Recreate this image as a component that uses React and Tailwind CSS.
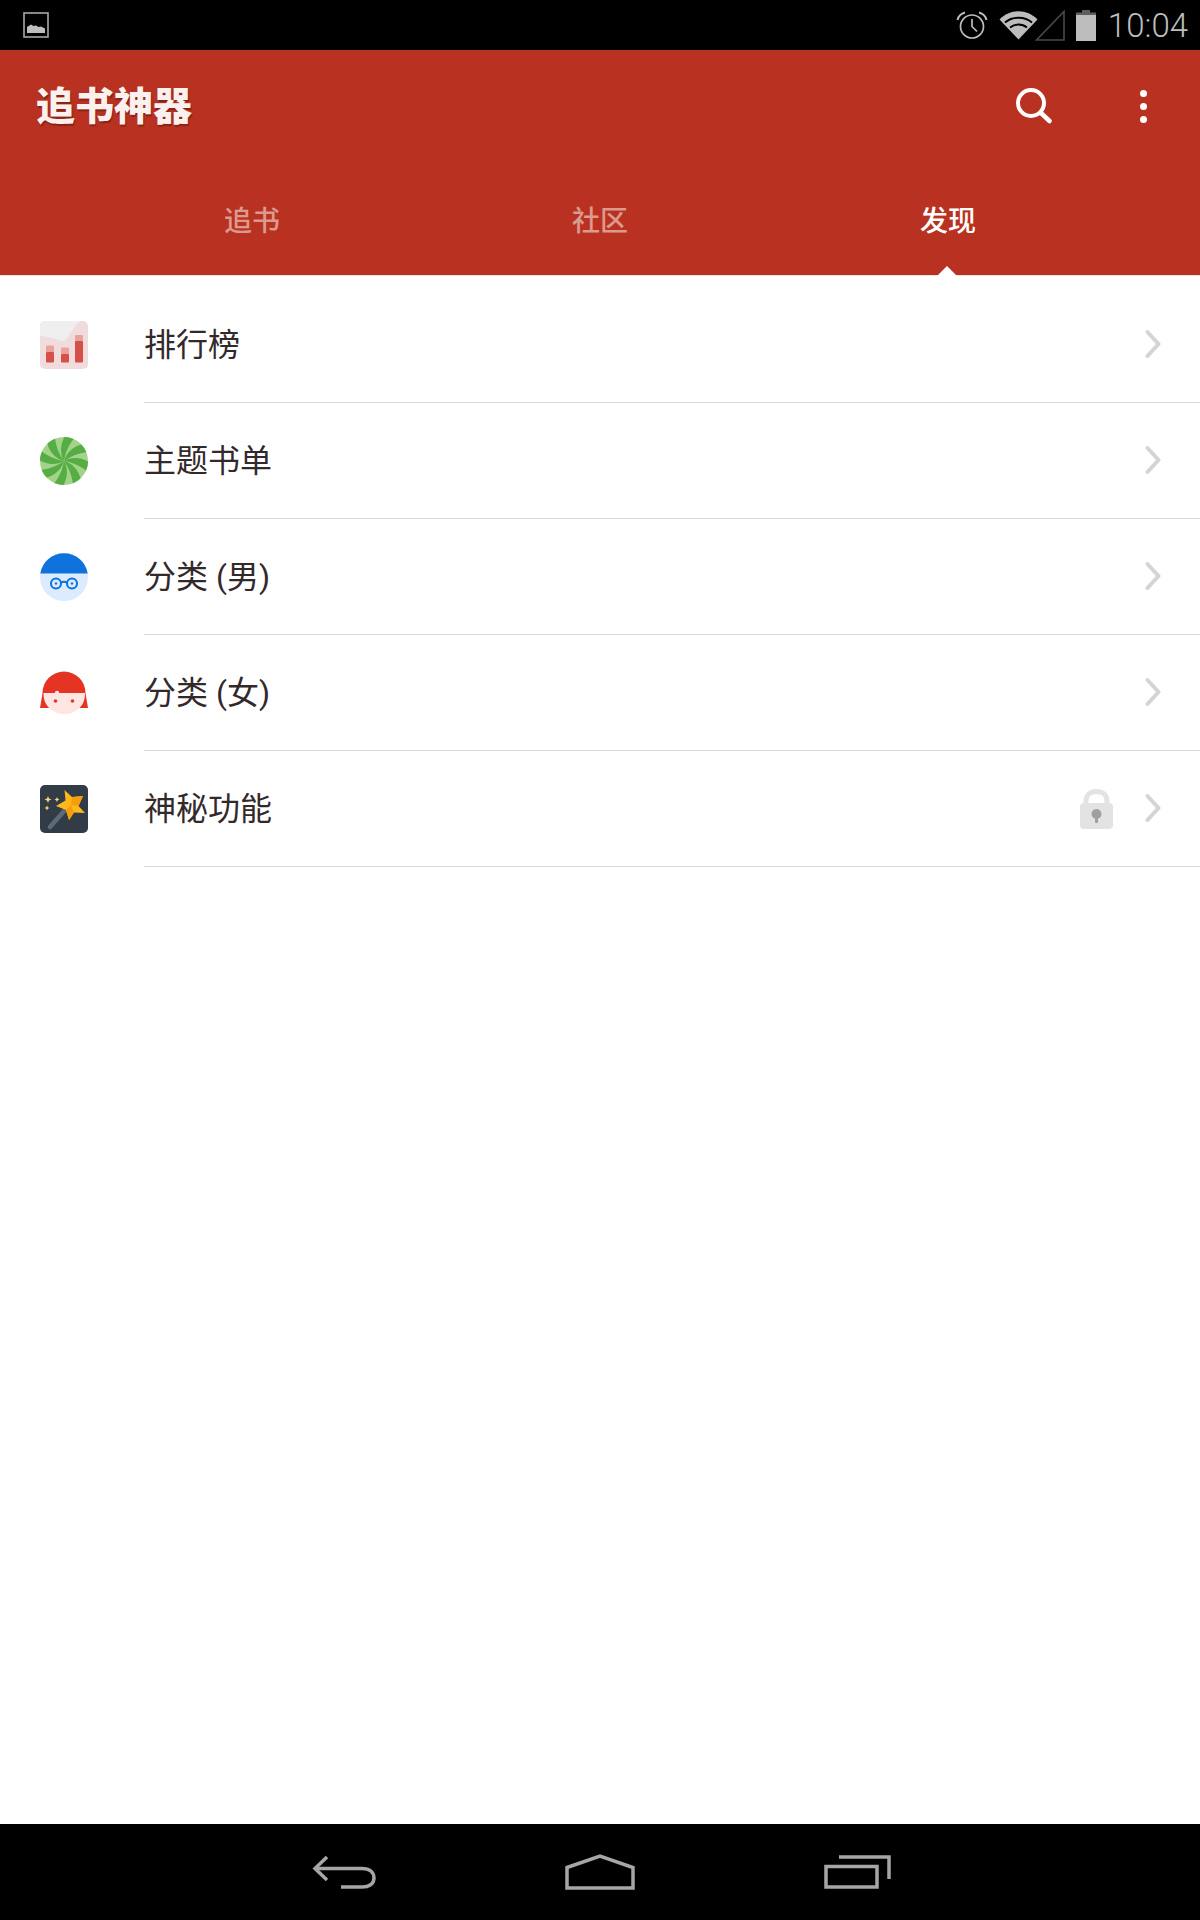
import React from "react";

const cjk = "font-['Roboto','Noto_Sans_CJK_SC',sans-serif]";

const PictureIcon = () => (
  <svg width="26" height="26" viewBox="0 0 26 26">
    <rect x="1" y="1" width="24" height="24" fill="none" stroke="#a8a8a8" strokeWidth="1.6" />
    <path d="M4 21V15L8 12.5 L10.5 14 L13 13.5 L15.5 15 L18 14.5 L20 15.5 L22 16.5 V21 Z" fill="#bdbdbd" />
  </svg>
);

const AlarmIcon = () => (
  <svg width="32" height="28" viewBox="0 0 32 28" fill="none" stroke="#bdbdbd">
    <circle cx="16" cy="15.5" r="11.5" strokeWidth="1.7" />
    <path d="M16 8V15.5L21 20.5" strokeWidth="1.7" />
    <path d="M1.5 9C2.5 5 5 2.5 9 1.5M30.5 9C29.5 5 27 2.5 23 1.5" strokeWidth="2" />
  </svg>
);

const WifiIcon = () => (
  <svg width="39" height="30" viewBox="0 0 39 30">
    <path d="M0.5 9.5C11 -1.5 28 -1.5 38.5 9.5L19.5 29.5Z" fill="#bdbdbd" />
    <path d="M6 12.5C13 6 26 6 33 12.5M11 17.5C16 13.5 23 13.5 28 17.5" fill="none" stroke="#000" strokeWidth="2" />
  </svg>
);

const SignalIcon = () => (
  <svg width="30" height="31" viewBox="0 0 30 31" className="-ml-[3px]">
    <path d="M1.5 30L29 1.5V30Z" fill="none" stroke="#4a4a4a" strokeWidth="1.6" />
  </svg>
);

const BatteryIcon = () => (
  <svg width="20" height="31" viewBox="0 0 20 31">
    <path d="M6 0H14V2.5H20V5H0V2.5H6Z" fill="#5e5e5e" />
    <rect x="0" y="5" width="20" height="26" fill="#bdbdbd" />
  </svg>
);

const SearchIcon = () => (
  <svg width="36" height="36" viewBox="0 0 36 36" fill="none" stroke="#fff" strokeLinecap="round">
    <circle cx="15" cy="15" r="13" strokeWidth="4" />
    <path d="M25 25L33.5 33" strokeWidth="4.5" />
  </svg>
);

const ChartIcon = () => (
  <svg width="48" height="48" viewBox="0 0 48 48">
    <rect width="48" height="48" rx="5" fill="#f0dcdc" />
    <path d="M0 14.5 C8 16 16 18 22 20 C28 21 29 10 40 0 H5 A5 5 0 0 0 0 5Z" fill="#efefef" />
    <path d="M6 25.5a1 1 0 0 1 1-1h6a1 1 0 0 1 1 1V31H6Z" fill="#e9a29e" />
    <rect x="6" y="31" width="8" height="10.5" fill="#d6504a" rx="1" />
    <path d="M21 27.5a1 1 0 0 1 1-1h6a1 1 0 0 1 1 1V33H21Z" fill="#e9a29e" />
    <rect x="21" y="33" width="8" height="8.5" fill="#d6504a" rx="1" />
    <path d="M35 15a1 1 0 0 1 1-1h6a1 1 0 0 1 1 1V20H35Z" fill="#e9a29e" />
    <rect x="35" y="20" width="8" height="21.5" fill="#d6504a" rx="1" />
  </svg>
);

// pinwheel blades of the candy icon
const bladeAngles = [0, 45, 90, 135, 180, 225, 270, 315];

const CandyIcon = () => (
  <svg width="48" height="48" viewBox="0 0 48 48">
    <circle cx="24" cy="24" r="24" fill="#a3d28a" />
    {bladeAngles.map((a) => (
      <path
        key={a}
        d="M24 24C20 17 20 8 24.5 0C27.5 0 30.5 .7 33.5 2C28 9 25.5 16 24 24Z"
        fill="#55ad43"
        transform={`rotate(${a} 24 24)`}
      />
    ))}
  </svg>
);

const BoyIcon = () => (
  <svg width="48" height="48" viewBox="0 0 48 48">
    <circle cx="24" cy="24" r="24" fill="#dcebff" />
    <path d="M0.3 20.5A24 24 0 0 1 47.7 20.5Z" fill="#0e71dc" />
    <g fill="none" stroke="#0e71dc" strokeWidth="2">
      <circle cx="16" cy="30.5" r="5" />
      <circle cx="32" cy="30.5" r="5" />
      <path d="M21 29.5C23 28.5 25 28.5 27 29.5" />
    </g>
    <circle cx="16" cy="30.5" r="1.2" fill="#0e71dc" />
    <circle cx="32" cy="30.5" r="1.2" fill="#0e71dc" />
  </svg>
);

const GirlIcon = () => (
  <svg width="48" height="48" viewBox="0 0 48 48">
    <path d="M2.5 24A21.5 21.5 0 0 1 45.5 24L48 39H0Z" fill="#e53423" />
    <path d="M3.5 24H45V25C45 37 36 45 24.5 45C13 45 3.5 37 3.5 25Z" fill="#ffe6e3" />
    <circle cx="17" cy="24" r="2.2" fill="#ffe6e3" />
    <circle cx="15.5" cy="32" r="1.8" fill="#e53423" />
    <circle cx="32.5" cy="32" r="1.8" fill="#e53423" />
  </svg>
);

const WandIcon = () => (
  <svg width="48" height="48" viewBox="0 0 48 48">
    <rect width="48" height="48" rx="5" fill="#323c46" />
    <path d="M10 42L25 25" stroke="#5b6a7c" strokeWidth="4.5" strokeLinecap="round" />
    <path d="M24.5 5L32 12L43 11L38.5 21L45 28L34 27.5L29 35L26 25L16 21L25.5 15.5Z" fill="#ffb71c" />
    <path d="M32 12L43 11L38.5 21L31 20ZM26 25L31 20L34 27.5L29 35Z" fill="#f59e0b" />
    <g fill="#f7d77b">
      <path d="M8 11L9 13.5 11.5 14.5 9 15.5 8 18 7 15.5 4.5 14.5 7 13.5Z" />
      <path d="M17 12L17.8 13.7 19.5 14.5 17.8 15.3 17 17 16.2 15.3 14.5 14.5 16.2 13.7Z" />
      <path d="M7 20.5L7.8 22.2 9.5 23 7.8 23.8 7 25.5 6.2 23.8 4.5 23 6.2 22.2Z" />
    </g>
  </svg>
);

const LockIcon = () => (
  <svg width="33" height="40" viewBox="0 0 33 40">
    <path d="M6 16V12C6 6 10 2.5 16.5 2.5C23 2.5 27 6 27 12V16" fill="none" stroke="#e3e3e3" strokeWidth="5" />
    <rect y="14" width="33" height="26" rx="4" fill="#e3e3e3" />
    <circle cx="16.5" cy="25" r="5" fill="#a0a0a0" />
    <rect x="15" y="26" width="3" height="8" rx="1" fill="#a0a0a0" />
  </svg>
);

const Chevron = () => (
  <svg width="16" height="30" viewBox="0 0 16 30" fill="none" stroke="#d4d4d4" strokeWidth="4" strokeLinecap="round" strokeLinejoin="round" className="-mt-[2px]">
    <path d="M2.5 3L13.5 15L2.5 27" />
  </svg>
);

const BackIcon = () => (
  <svg width="64" height="33" viewBox="0 0 64 33" fill="none" stroke="#a6a6a6" strokeWidth="3.5">
    <path d="M15 1L3 12.5L15 24" />
    <path d="M3 12.5H50C57 12.5 62 15.5 62 22C62 28 57 31 50 31H29" />
  </svg>
);

const HomeIcon = () => (
  <svg width="70" height="36" viewBox="0 0 70 36" fill="none" stroke="#a6a6a6" strokeWidth="3.5">
    <path d="M2 13.5L35 2L68 13.5V34H2Z" />
  </svg>
);

const RecentIcon = () => (
  <svg width="67" height="34" viewBox="0 0 67 34" fill="none" stroke="#a6a6a6" strokeWidth="3.5">
    <rect x="2" y="11.5" width="51" height="20.5" />
    <path d="M15 2H65V24" />
  </svg>
);

const rows = [
  { label: "排行榜", icon: <ChartIcon /> },
  { label: "主题书单", icon: <CandyIcon /> },
  { label: "分类 (男)", icon: <BoyIcon /> },
  { label: "分类 (女)", icon: <GirlIcon /> },
  { label: "神秘功能", icon: <WandIcon />, locked: true },
];

const tabs = [
  { label: "追书", active: false },
  { label: "社区", active: false },
  { label: "发现", active: true },
];

const App = () => {
  return (
    <div className={`w-[1200px] h-[1920px] flex flex-col bg-white overflow-hidden ${cjk}`}>
      {/* status bar */}
      <div className="h-[50px] bg-black flex items-center pl-[23px] pr-[12px]">
        <PictureIcon />
        <div className="ml-auto flex items-center">
          <AlarmIcon />
          <div className="ml-[11px] flex items-center">
            <WifiIcon />
            <SignalIcon />
          </div>
          <div className="ml-[11px]">
            <BatteryIcon />
          </div>
          <span className="ml-[12px] text-[33px] leading-none text-[#bdbdbd] font-['Roboto',sans-serif] font-light">10:04</span>
        </div>
      </div>

      {/* action bar + tabs */}
      <div className="h-[225px] bg-[#b93221] flex flex-col shrink-0">
        <div className="h-[112px] flex items-center pl-[36px] pr-[53px]">
          <span className="-mt-[5px] text-[39px] leading-none font-black text-[#faf0ee] [text-shadow:1px_2px_1px_rgba(90,20,10,0.5)] font-['Noto_Sans_CJK_SC',sans-serif]">
            追书神器
          </span>
          <div className="ml-auto mr-[88px]">
            <SearchIcon />
          </div>
          <div className="flex flex-col gap-[6px]">
            <span className="w-[7px] h-[7px] rounded-full bg-white" />
            <span className="w-[7px] h-[7px] rounded-full bg-white" />
            <span className="w-[7px] h-[7px] rounded-full bg-white" />
          </div>
        </div>
        <div className="flex-1 flex px-[78px]">
          {tabs.map((tab) => (
            <div key={tab.label} className="relative flex-1 flex items-center justify-center pt-[7px]">
              <span className={`text-[28px] leading-none ${tab.active ? "text-white font-medium" : "text-[#dc9a8f] font-medium"}`}>
                {tab.label}
              </span>
              {tab.active && (
                <span className="absolute bottom-[-1px] left-[calc(50%-11px)] w-0 h-0 border-x-[10px] border-x-transparent border-b-[10px] border-b-white" />
              )}
            </div>
          ))}
        </div>
      </div>

      {/* menu list */}
      <div className="flex-1 border-t border-[#e4e4e4] pt-[11px]">
        {rows.map((row) => (
          <div key={row.label} className="h-[116px] flex items-center pl-[40px]">
            <div className="w-[48px] h-[48px] shrink-0">{row.icon}</div>
            <div className="ml-[56px] h-full flex-1 flex items-center border-b border-[#d9d9d9] pr-[39px]">
              <span className="text-[32px] leading-none text-[#33292b]">{row.label}</span>
              <div className="ml-auto flex items-center">
                {row.locked && (
                  <div className="mr-[32px]">
                    <LockIcon />
                  </div>
                )}
                <Chevron />
              </div>
            </div>
          </div>
        ))}
      </div>

      {/* nav bar */}
      <div className="h-[96px] bg-black flex items-center pl-[312px] pr-[309px] shrink-0">
        <div className="flex items-center w-full justify-between">
          <BackIcon />
          <HomeIcon />
          <RecentIcon />
        </div>
      </div>
    </div>
  );
};

export default App;
